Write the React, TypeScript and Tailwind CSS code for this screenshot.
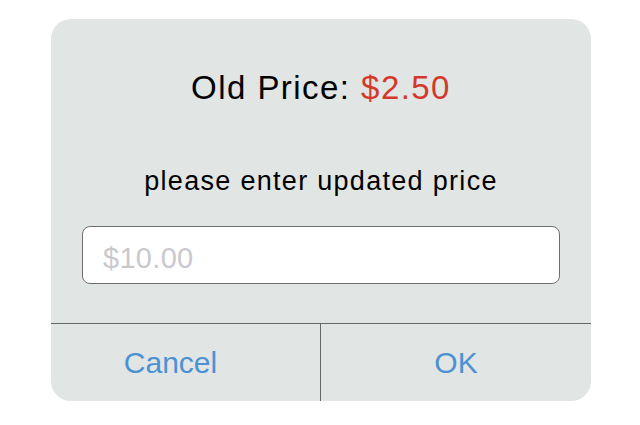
export default function App() {
  return (
    <div className="w-[640px] h-[425px] bg-white pt-[19px] font-['Liberation_Sans',Arial,sans-serif]">
      <div className="ml-[51px] w-[540px] h-[382px] rounded-[20px] bg-[#e1e5e4] flex flex-col overflow-hidden">
        <h1 className="pt-[52px] text-center text-[33px] leading-none tracking-[1.45px] text-black">
          Old Price: <span className="text-[#d3392a]">$2.50</span>
        </h1>
        <p className="mt-[64px] text-center text-[27px] leading-none tracking-[1.3px] text-black">
          please enter updated price
        </p>
        <div className="mt-[31px] px-[31px]">
          <input
            type="text"
            placeholder="$10.00"
            className="box-border w-[478px] h-[58px] rounded-[8px] border border-[#6e6e6e] bg-white pl-[20px] pt-[7px] text-[29px] leading-[29px] tracking-[0.3px] outline-none placeholder:text-[#c9c9cd]"
          />
        </div>
        <div className="mt-[39px] flex flex-1 border-t border-[#666]">
          <button className="w-[270px] border-r border-[#666] pr-[30px] text-[30px] leading-none text-[#4b92d3]">
            Cancel
          </button>
          <button className="flex-1 text-[30px] leading-none text-[#4b92d3]">OK</button>
        </div>
      </div>
    </div>
  );
}
